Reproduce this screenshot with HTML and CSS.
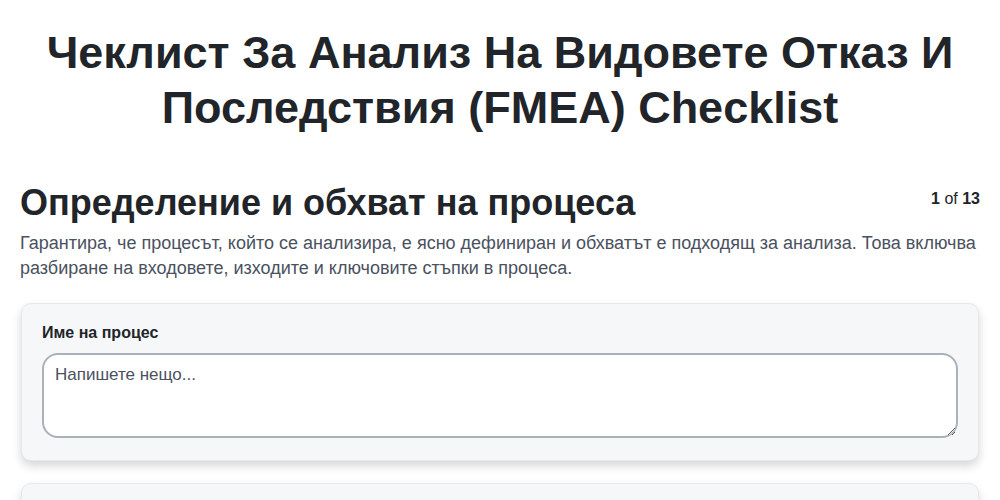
FILE: index.html
```html
<!DOCTYPE html>
<html lang="bg">
<head>
<meta charset="utf-8">
<link rel="stylesheet" href="styles.css">
</head>
<body>
<div class="page">
  <h1 class="title">Чеклист За Анализ На Видовете Отказ И Последствия (FMEA) Checklist</h1>
  <section class="section">
    <div class="section-head">
      <h2 class="section-title">Определение и обхват на процеса</h2>
      <div class="counter"><b>1</b> of <b>13</b></div>
    </div>
    <p class="section-desc">Гарантира, че процесът, който се анализира, е ясно дефиниран и обхватът е подходящ за анализа. Това включва разбиране на входовете, изходите и ключовите стъпки в процеса.</p>
    <div class="card">
      <label class="field-label" for="f1">Име на процес</label>
      <textarea id="f1" class="field-input" placeholder="Напишете нещо..."></textarea>
    </div>
    <div class="card card-next"></div>
  </section>
</div>
</body>
</html>
```

FILE: styles.css
```css
* { box-sizing: border-box; }
html, body { margin: 0; padding: 0; background: #ffffff; }
body {
  font-family: "Liberation Sans", Arial, sans-serif;
  color: #212529;
}
.page {
  padding: 0 21px 0 21px;
}
.title {
  margin: 25px 0 0;
  text-align: center;
  font-size: 45px;
  line-height: 55px;
  font-weight: 700;
  color: #212529;
}
.section {
  margin-top: 46px;
}
.section-head {
  display: flex;
  justify-content: space-between;
  align-items: flex-start;
}
.section-title {
  margin: 0 0 0 -1px;
  font-size: 36px;
  line-height: 44px;
  font-weight: 700;
  color: #212529;
}
.counter {
  font-size: 16px;
  color: #212529;
  padding-top: 9px;
  margin-right: -1px;
}
.section-desc {
  margin: 6px 0 0 -1px;
  font-size: 18px;
  line-height: 25px;
  color: #4a5160;
}
.card {
  margin-top: 22px;
  background: #f6f7f9;
  border: 1px solid #e6e8eb;
  border-radius: 10px;
  box-shadow: 0 5px 10px rgba(0, 0, 0, 0.16);
  padding: 19px 20px 22px;
}
.card-next {
  margin-top: 22px;
  height: 60px;
}
.field-label {
  display: block;
  font-size: 16px;
  font-weight: 700;
  line-height: 20px;
  color: #212529;
  margin-bottom: 10px;
}
.field-input {
  display: block;
  width: 100%;
  height: 85px;
  border: 2px solid #aab1b9;
  border-radius: 16px;
  background: #ffffff;
  padding: 10px 11px;
  font-family: "Liberation Sans", Arial, sans-serif;
  font-size: 17px;
  color: #212529;
  resize: vertical;
}
.field-input::placeholder {
  color: #4a5160;
  opacity: 1;
}
```
